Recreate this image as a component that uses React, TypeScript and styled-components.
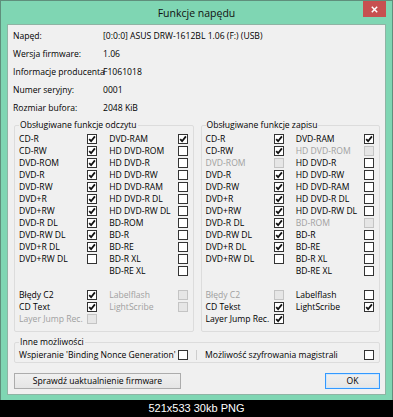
import { Fragment } from "react";
import styled, { createGlobalStyle } from "styled-components";

const GlobalStyle = createGlobalStyle`
  html, body {
    margin: 0;
    padding: 0;
    background: #000;
  }
  body {
    width: 393px;
    height: 417px;
    overflow: hidden;
    font-family: "Open Sans", "Noto Sans", sans-serif;
    font-size: 8.6px;
    color: #000;
  }
  * {
    box-sizing: border-box;
  }
`;

const Page = styled.div`
  display: flex;
  flex-direction: column;
  width: 393px;
  height: 417px;
`;

const Window = styled.div`
  height: 400px;
  display: flex;
  flex-direction: column;
  background: #7fd6b3;
  border: 1px solid #5f8f7c;
  border-bottom: none;
  padding: 0 6px 5px;
`;

const TitleBar = styled.div`
  height: 23px;
  display: grid;
  grid-template-columns: 1fr auto 1fr;
  align-items: start;
`;

const Title = styled.div`
  grid-column: 2;
  align-self: center;
  font-size: 10.5px;
  color: #111;
`;

const CloseButton = styled.div`
  grid-column: 3;
  justify-self: end;
  width: 23px;
  height: 16px;
  background: #c75050;
  display: flex;
  align-items: center;
  justify-content: center;
`;

const Client = styled.div`
  flex: 1;
  display: flex;
  flex-direction: column;
  background: #f0f0f0;
  border: 1px solid #8eb4a4;
  padding: 2px 5px 5px 6px;
`;

const InfoList = styled.div`
  display: grid;
  grid-template-columns: 90px 1fr;
  grid-auto-rows: 18px;
  align-items: center;
  margin-left: -1px;
  white-space: nowrap;
`;

const GroupsRow = styled.div`
  display: grid;
  grid-template-columns: 1fr 1fr;
  column-gap: 7px;
  margin-top: 2px;
`;

const Group = styled.fieldset<{ $bottom?: number; $top?: number }>`
  margin: ${(p) => p.$top ?? 0}px 0 0;
  min-width: 0;
  border: 1px solid #dcdcdc;
  border-radius: 2px;
  padding: 0 5px ${(p) => p.$bottom ?? 6}px 4px;
`;

const Legend = styled.legend`
  padding: 0 1px;
  line-height: 12px;
  white-space: nowrap;
`;

const Columns = styled.div<{ $top: number }>`
  display: grid;
  grid-template-columns: 1fr 1fr;
  column-gap: 12px;
  margin-top: ${(p) => p.$top}px;
`;

const Column = styled.div`
  display: flex;
  flex-direction: column;
`;

const Row = styled.div`
  height: 12px;
  display: flex;
  align-items: center;
  justify-content: space-between;
  white-space: nowrap;
`;

const Label = styled.span<{ $disabled?: boolean }>`
  color: ${(p) => (p.$disabled ? "#a0a0a0" : "#000")};
`;

const Box = styled.span<{ $disabled?: boolean }>`
  width: 10px;
  height: 10px;
  flex: none;
  display: flex;
  align-items: center;
  justify-content: center;
  background: ${(p) => (p.$disabled ? "#e6e6e6" : "#fff")};
  border: 1px solid ${(p) => (p.$disabled ? "#c4c4c4" : "#333")};
`;

const OtherGrid = styled.div`
  display: grid;
  grid-template-columns: 1fr 1px 1fr;
  column-gap: 8px;
  padding-top: 1px;
`;

const Separator = styled.div`
  width: 1px;
  height: 10px;
  align-self: center;
  background: #cdcdcd;
`;

const ButtonRow = styled.div`
  display: flex;
  justify-content: space-between;
  margin-top: 10px;
`;

const Button = styled.div<{ $width: number; $default?: boolean }>`
  width: ${(p) => p.$width}px;
  height: 16px;
  display: flex;
  align-items: center;
  justify-content: center;
  background: linear-gradient(#f0f0f0, #e5e5e5);
  border: 1px solid ${(p) => (p.$default ? "#3399ff" : "#acacac")};
  box-shadow: ${(p) => (p.$default ? "inset 0 0 0 1px #cfe6fb" : "none")};
`;

const Caption = styled.div`
  height: 17px;
  line-height: 17px;
  text-align: center;
  color: #fff;
  font-family: "Liberation Sans", Arial, sans-serif;
  font-size: 11px;
`;

type Item = { label: string; checked?: boolean; disabled?: boolean };

const Check = ({ checked, disabled }: { checked?: boolean; disabled?: boolean }) => (
  <Box $disabled={disabled}>
    {checked && (
      <svg width="8" height="8" viewBox="0 0 8 8">
        <path d="M1.2 4.2 L3.1 6.2 L6.9 1.4" fill="none" stroke="#111" strokeWidth="1.8" />
      </svg>
    )}
  </Box>
);

const ItemColumn = ({ items }: { items: Item[] }) => (
  <Column>
    {items.map((it) => (
      <Row key={it.label}>
        <Label $disabled={it.disabled}>{it.label}</Label>
        <Check checked={it.checked} disabled={it.disabled} />
      </Row>
    ))}
  </Column>
);

const readLeft: Item[] = [
  { label: "CD-R", checked: true },
  { label: "CD-RW", checked: true },
  { label: "DVD-ROM", checked: true },
  { label: "DVD-R", checked: true },
  { label: "DVD-RW", checked: true },
  { label: "DVD+R", checked: true },
  { label: "DVD+RW", checked: true },
  { label: "DVD-R DL", checked: true },
  { label: "DVD-RW DL", checked: true },
  { label: "DVD+R DL", checked: true },
  { label: "DVD+RW DL" },
];

const readRight: Item[] = [
  { label: "DVD-RAM", checked: true },
  { label: "HD DVD-ROM" },
  { label: "HD DVD-R" },
  { label: "HD DVD-RW" },
  { label: "HD DVD-RAM" },
  { label: "HD DVD-R DL" },
  { label: "HD DVD-RW DL" },
  { label: "BD-ROM" },
  { label: "BD-R" },
  { label: "BD-RE" },
  { label: "BD-R XL" },
  { label: "BD-RE XL" },
];

const writeLeft: Item[] = [
  { label: "CD-R", checked: true },
  { label: "CD-RW", checked: true },
  { label: "DVD-ROM", disabled: true },
  { label: "DVD-R", checked: true },
  { label: "DVD-RW", checked: true },
  { label: "DVD+R", checked: true },
  { label: "DVD+RW", checked: true },
  { label: "DVD-R DL", checked: true },
  { label: "DVD-RW DL", checked: true },
  { label: "DVD+R DL", checked: true },
  { label: "DVD+RW DL" },
];

const writeRight: Item[] = [
  { label: "DVD-RAM", checked: true },
  { label: "HD DVD-ROM", disabled: true },
  { label: "HD DVD-R" },
  { label: "HD DVD-RW" },
  { label: "HD DVD-RAM" },
  { label: "HD DVD-R DL" },
  { label: "HD DVD-RW DL" },
  { label: "BD-ROM", disabled: true },
  { label: "BD-R" },
  { label: "BD-RE" },
  { label: "BD-R XL" },
  { label: "BD-RE XL" },
];

const readExtraLeft: Item[] = [
  { label: "Błędy C2", checked: true },
  { label: "CD Text", checked: true },
  { label: "Layer Jump Rec.", disabled: true },
];

const readExtraRight: Item[] = [
  { label: "Labelflash", disabled: true },
  { label: "LightScribe", disabled: true },
];

const writeExtraLeft: Item[] = [
  { label: "Błędy C2", disabled: true },
  { label: "CD Tekst", checked: true },
  { label: "Layer Jump Rec.", checked: true },
];

const writeExtraRight: Item[] = [
  { label: "Labelflash" },
  { label: "LightScribe", checked: true },
];

const info: [string, string][] = [
  ["Napęd:", "[0:0:0] ASUS DRW-1612BL 1.06 (F:) (USB)"],
  ["Wersja firmware:", "1.06"],
  ["Informacje producenta", "F1061018"],
  ["Numer seryjny:", "0001"],
  ["Rozmiar bufora:", "2048 KiB"],
];

const FeatureGroup = ({
  title,
  left,
  right,
  extraLeft,
  extraRight,
}: {
  title: string;
  left: Item[];
  right: Item[];
  extraLeft: Item[];
  extraRight: Item[];
}) => (
  <Group>
    <Legend>{title}</Legend>
    <Columns $top={2}>
      <ItemColumn items={left} />
      <ItemColumn items={right} />
    </Columns>
    <Columns $top={12}>
      <ItemColumn items={extraLeft} />
      <ItemColumn items={extraRight} />
    </Columns>
  </Group>
);

export default function App() {
  return (
    <Page>
      <GlobalStyle />
      <Window>
        <TitleBar>
          <Title>Funkcje napędu</Title>
          <CloseButton>
            <svg width="7" height="7" viewBox="0 0 7 7">
              <path d="M0.8 0.8 L6.2 6.2 M6.2 0.8 L0.8 6.2" stroke="#fff" strokeWidth="1.5" />
            </svg>
          </CloseButton>
        </TitleBar>
        <Client>
          <InfoList>
            {info.map(([k, v]) => (
              <Fragment key={k}>
                <span>{k}</span>
                <span>{v}</span>
              </Fragment>
            ))}
          </InfoList>
          <GroupsRow>
            <FeatureGroup
              title="Obsługiwane funkcje odczytu"
              left={readLeft}
              right={readRight}
              extraLeft={readExtraLeft}
              extraRight={readExtraRight}
            />
            <FeatureGroup
              title="Obsługiwane funkcje zapisu"
              left={writeLeft}
              right={writeRight}
              extraLeft={writeExtraLeft}
              extraRight={writeExtraRight}
            />
          </GroupsRow>
          <Group $bottom={1} $top={4}>
            <Legend>Inne możliwości</Legend>
            <OtherGrid>
              <Row>
                <Label>Wspieranie 'Binding Nonce Generation'</Label>
                <Check />
              </Row>
              <Separator />
              <Row>
                <Label>Możliwość szyfrowania magistrali</Label>
                <Check />
              </Row>
            </OtherGrid>
          </Group>
          <ButtonRow>
            <Button $width={167}>Sprawdź uaktualnienie firmware</Button>
            <Button $width={55} $default>
              OK
            </Button>
          </ButtonRow>
        </Client>
      </Window>
      <Caption>521x533 30kb PNG</Caption>
    </Page>
  );
}
